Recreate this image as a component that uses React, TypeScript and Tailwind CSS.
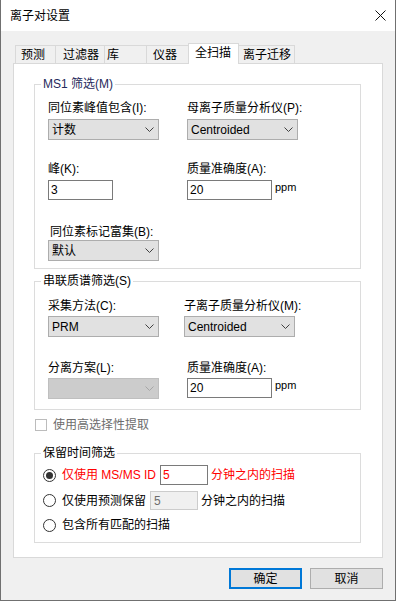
import { ReactNode } from "react"

const tabs = [
    { title: "预测", w: "w-[40px]", pl: "pl-[5px]" },
    { title: "过滤器", w: "w-[49px]", pl: "pl-[7px]" },
    { title: "库", w: "w-[42px]", pl: "pl-[2px]" },
    { title: "仪器", w: "w-[42px]", pl: "pl-[6px]" },
]

const Chevron = ({ color = "#404040" }: { color?: string }) => (
    <svg width="9" height="5" viewBox="0 0 9 5" fill="none">
        <polyline points="0.5,0.5 4.5,4.5 8.5,0.5" stroke={color} strokeWidth="1" />
    </svg>
)

const Select = ({ value, disabled = false }: { value?: string; disabled?: boolean }) => (
    <div
        className={`flex h-[21px] w-[111px] items-center justify-between border pl-[3px] pr-[4px] ${
            disabled ? "border-[#bfbfbf] bg-[#cccccc]" : "border-[#adadad] bg-[#e1e1e1]"
        }`}
    >
        <span className="leading-4">{value}</span>
        <Chevron color={disabled ? "#a6a6a6" : "#404040"} />
    </div>
)

const Field = ({ value, w }: { value: string; w: string }) => (
    <div className={`flex h-[20px] items-center border border-[#7a7a7a] bg-white pl-[2px] ${w}`}>
        <span className="leading-4">{value}</span>
    </div>
)

const Label = ({ children, className = "" }: { children: ReactNode; className?: string }) => (
    <div className={`leading-4 ${className}`}>{children}</div>
)

const Group = ({ title, className, children, titleClass = "" }: { title: string; className: string; children: ReactNode; titleClass?: string }) => (
    <div className={`relative border border-[#dcdcdc] ${className}`}>
        <span className={`absolute -top-[9px] left-[6px] bg-white px-[2px] leading-4 ${titleClass}`}>{title}</span>
        {children}
    </div>
)

const Radio = ({ checked = false }: { checked?: boolean }) => (
    <div className="flex h-[13px] w-[13px] items-center justify-center rounded-full border border-[#333333] bg-white">
        {checked && <div className="h-[7px] w-[7px] rounded-full bg-[#333333]" />}
    </div>
)

const App = () => {
    return (
        <div className="h-[602px] w-[397px] bg-white font-['Liberation_Sans','Noto_Sans_CJK_SC',sans-serif] text-[12px] text-black">
            <div className="flex h-[601px] w-[396px] flex-col border-x border-b border-[#707070] bg-[#f0f0f0]">
                {/* title bar */}
                <div className="flex h-[31px] items-center justify-between bg-white pl-[9px] pr-[8px]">
                    <span className="leading-4">离子对设置</span>
                    <svg width="11" height="11" viewBox="0 0 11 11" className="mr-[1px]">
                        <line x1="0.5" y1="0.5" x2="10.5" y2="10.5" stroke="#111" strokeWidth="1" />
                        <line x1="10.5" y1="0.5" x2="0.5" y2="10.5" stroke="#111" strokeWidth="1" />
                    </svg>
                </div>

                <div className="px-[12px] pt-[12px]">
                    {/* tabs */}
                    <div className="flex h-[20px] items-end pl-[2px]">
                        {tabs.map((tab) => (
                            <div
                                key={tab.title}
                                className={`flex h-[18px] items-center border-l border-t border-[#d9d9d9] bg-[#f0f0f0] ${tab.w} ${tab.pl}`}
                            >
                                <span className="leading-4">{tab.title}</span>
                            </div>
                        ))}
                        <div className="relative z-10 -mb-[1px] flex h-[21px] w-[51px] items-start border-x border-t border-[#d9d9d9] bg-white pl-[6px] pt-[1px]">
                            <span className="leading-4">全扫描</span>
                        </div>
                        <div className="flex h-[18px] w-[56px] items-center border-r border-t border-[#d9d9d9] bg-[#f0f0f0] pl-[4px]">
                            <span className="leading-4">离子迁移</span>
                        </div>
                    </div>

                    {/* panel */}
                    <div className="border border-[#d9d9d9] bg-white pb-[14px] pl-[20px] pr-[21px] pt-[20px]">
                        <Group title="MS1 筛选(M)" titleClass="text-[#1f2a5c]" className="pb-[7px] pl-[13px] pt-[15px]">
                            <div className="flex">
                                <div className="w-[139px]">
                                    <Label>同位素峰值包含(I):</Label>
                                    <div className="mt-[3px]"><Select value="计数" /></div>
                                </div>
                                <div>
                                    <Label>母离子质量分析仪(P):</Label>
                                    <div className="mt-[3px]"><Select value="Centroided" /></div>
                                </div>
                            </div>
                            <div className="mt-[21px] flex">
                                <div className="w-[139px]">
                                    <Label>峰(K):</Label>
                                    <div className="mt-[3px]"><Field value="3" w="w-[65px]" /></div>
                                </div>
                                <div>
                                    <Label>质量准确度(A):</Label>
                                    <div className="mt-[3px] flex items-start">
                                        <Field value="20" w="w-[85px]" />
                                        <span className="ml-[3px] text-[11px] leading-[14px]">ppm</span>
                                    </div>
                                </div>
                            </div>
                            <div className="mt-[24px]">
                                <Label className="ml-[2px]">同位素标记富集(B):</Label>
                                <Select value="默认" />
                            </div>
                        </Group>

                        <Group title="串联质谱筛选(S)" className="mt-[12px] pb-[10px] pl-[13px] pt-[16px]">
                            <div className="flex">
                                <div className="w-[136px]">
                                    <Label>采集方法(C):</Label>
                                    <div className="mt-[2px]"><Select value="PRM" /></div>
                                </div>
                                <div>
                                    <Label>子离子质量分析仪(M):</Label>
                                    <div className="mt-[2px]"><Select value="Centroided" /></div>
                                </div>
                            </div>
                            <div className="mt-[23px] flex">
                                <div className="w-[139px]">
                                    <Label>分离方案(L):</Label>
                                    <div className="mt-[2px]"><Select disabled /></div>
                                </div>
                                <div>
                                    <Label>质量准确度(A):</Label>
                                    <div className="mt-[2px] flex items-start">
                                        <Field value="20" w="w-[85px]" />
                                        <span className="ml-[3px] text-[11px] leading-[14px]">ppm</span>
                                    </div>
                                </div>
                            </div>
                        </Group>

                        {/* checkbox */}
                        <div className="ml-[1px] mt-[7px] flex h-[16px] items-center">
                            <div className="h-[12px] w-[12px] border border-[#bcbcbc] bg-white" />
                            <span className="ml-[6px] leading-4 text-[#6d6d6d]">使用高选择性提取</span>
                        </div>

                        <Group title="保留时间筛选" className="mt-[20px] pb-[7px] pl-[8px] pt-[11px]">
                            <div className="flex h-[20px] items-center">
                                <Radio checked />
                                <span className="ml-[6px] leading-4 text-[#ff0000]">仅使用 MS/MS ID</span>
                                <div className="ml-[4px] flex h-[20px] w-[48px] items-center border border-[#7a7a7a] bg-white pl-[2px]">
                                    <span className="leading-4 text-[#ff0000]">5</span>
                                </div>
                                <span className="ml-[3px] leading-4 text-[#ff0000]">分钟之内的扫描</span>
                            </div>
                            <div className="mt-[6px] flex h-[19px] items-center">
                                <Radio />
                                <span className="ml-[6px] leading-4">仅使用预测保留</span>
                                <div className="ml-[4px] flex h-[19px] w-[48px] items-center border border-[#cccccc] bg-[#f0f0f0] pl-[3px]">
                                    <span className="leading-4 text-[#6d6d6d]">5</span>
                                </div>
                                <span className="ml-[3px] leading-4">分钟之内的扫描</span>
                            </div>
                            <div className="mt-[5px] flex h-[20px] items-center">
                                <Radio />
                                <span className="ml-[6px] leading-4">包含所有匹配的扫描</span>
                            </div>
                        </Group>
                    </div>

                    {/* buttons */}
                    <div className="mt-[10px] flex justify-end gap-[8px] pr-[0px]">
                        <button className="flex h-[21px] w-[73px] items-center justify-center border-2 border-[#0078d7] bg-[#e1e1e1]">
                            <span className="leading-4">确定</span>
                        </button>
                        <button className="flex h-[21px] w-[73px] items-center justify-center border border-[#adadad] bg-[#e1e1e1]">
                            <span className="leading-4">取消</span>
                        </button>
                    </div>
                </div>
            </div>
        </div>
    )
}

export default App
